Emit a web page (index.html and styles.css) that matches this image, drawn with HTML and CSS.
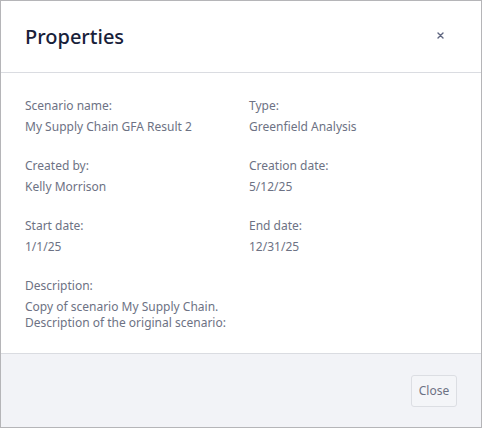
FILE: index.html
```html
<!DOCTYPE html>
<html lang="en">
<head>
<meta charset="utf-8">
<title>Properties</title>
<link rel="stylesheet" href="styles.css">
</head>
<body>
<div class="dialog">
  <header class="dialog-header">
    <h1 class="dialog-title">Properties</h1>
    <button class="close-x" aria-label="Close">
      <svg width="7" height="7" viewBox="0 0 7 7"><path d="M1 1L6 6M6 1L1 6" stroke="#5f6680" stroke-width="1.4" stroke-linecap="round"/></svg>
    </button>
  </header>
  <main class="dialog-body">
    <div class="field">
      <div class="label">Scenario name:</div>
      <div class="value">My Supply Chain GFA Result 2</div>
    </div>
    <div class="field">
      <div class="label">Type:</div>
      <div class="value">Greenfield Analysis</div>
    </div>
    <div class="field">
      <div class="label">Created by:</div>
      <div class="value">Kelly Morrison</div>
    </div>
    <div class="field">
      <div class="label">Creation date:</div>
      <div class="value">5/12/25</div>
    </div>
    <div class="field">
      <div class="label">Start date:</div>
      <div class="value">1/1/25</div>
    </div>
    <div class="field">
      <div class="label">End date:</div>
      <div class="value">12/31/25</div>
    </div>
    <div class="field">
      <div class="label">Description:</div>
      <div class="value">Copy of scenario My Supply Chain.<br>Description of the original scenario:</div>
    </div>
  </main>
  <footer class="dialog-footer">
    <button class="btn">Close</button>
  </footer>
</div>
</body>
</html>
```
FILE: styles.css
```css
html, body {
  margin: 0;
  padding: 0;
  background: #ffffff;
}
body {
  font-family: "Noto Sans", "Open Sans", sans-serif;
}
.dialog {
  box-sizing: border-box;
  width: 482px;
  height: 428px;
  border: 1px solid #b5b5b8;
  display: flex;
  flex-direction: column;
  background: #ffffff;
}
.dialog-header {
  height: 72px;
  flex: none;
  box-sizing: border-box;
  border-bottom: 1px solid #dadce1;
  display: flex;
  align-items: center;
  justify-content: space-between;
  padding: 0 37px 0 24px;
}
.dialog-title {
  margin: 0;
  font-size: 20px;
  font-weight: 500;
  color: #18213a;
  line-height: 24px;
}
.close-x {
  border: 0;
  background: transparent;
  padding: 0;
  width: 7px;
  height: 7px;
  display: flex;
  margin-bottom: 2px;
}
.dialog-body {
  flex: 1;
  display: grid;
  grid-template-columns: 208px 208px;
  column-gap: 16px;
  row-gap: 23px;
  padding: 25px 24px 0 24px;
  align-content: start;
}
.field {
  display: flex;
  flex-direction: column;
  gap: 5px;
}
.label, .value {
  font-size: 12px;
  line-height: 16px;
  color: #6d7284;
}
.dialog-footer {
  height: 74px;
  flex: none;
  box-sizing: border-box;
  border-top: 1px solid #dadce1;
  background: #f2f3f7;
  display: flex;
  align-items: center;
  justify-content: flex-end;
  padding: 0 24px 0 24px;
}
.btn {
  font-family: "Noto Sans", "Open Sans", sans-serif;
  font-size: 12px;
  color: #6d7284;
  background: #f4f5f8;
  border: 1px solid #dcdee3;
  border-radius: 3px;
  width: 46px;
  height: 32px;
  padding: 0;
}
```
